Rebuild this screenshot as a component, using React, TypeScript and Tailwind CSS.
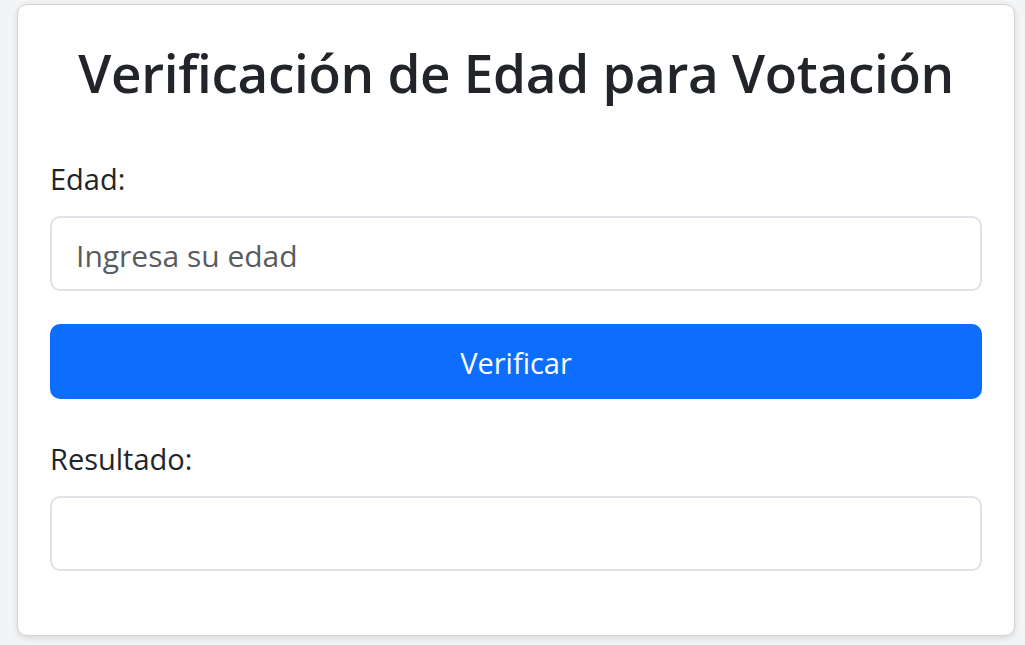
export default function App() {
  return (
    <div
      className="w-[1025px] h-[645px] bg-[#f3f4f5] pt-[4px] pl-[17px] overflow-hidden"
      style={{ fontFamily: '"Open Sans", "Noto Sans", sans-serif' }}
    >
      <div className="w-[998px] h-[632px] bg-white border border-[#d2d4d6] rounded-[10px] shadow-[0_2px_6px_rgba(0,0,0,0.12)] px-[32px] pt-[32px] text-[#212529]">
        <h1 className="text-center text-[53px] font-semibold leading-[72px] tracking-[-0.3px]">
          Verificación de Edad para Votación
        </h1>
        <label className="block mt-[50px] text-[29px] leading-[40px]">Edad:</label>
        <input
          type="number"
          placeholder="Ingresa su edad"
          className="block mt-[17px] w-full h-[75px] border-2 border-[#dee2e6] rounded-[10px] px-[24px] pt-[3px] text-[30px] placeholder:text-[#595c5f] outline-none"
        />
        <button className="block mt-[33px] w-full h-[75px] bg-[#0d6efd] rounded-[10px] text-white text-[29px] pt-[2px]">
          Verificar
        </button>
        <label className="block mt-[40px] text-[29px] leading-[40px]">Resultado:</label>
        <input
          type="text"
          readOnly
          className="block mt-[17px] w-full h-[75px] border-2 border-[#dee2e6] rounded-[10px] px-[24px] pt-[3px] text-[30px] outline-none"
        />
      </div>
    </div>
  );
}
